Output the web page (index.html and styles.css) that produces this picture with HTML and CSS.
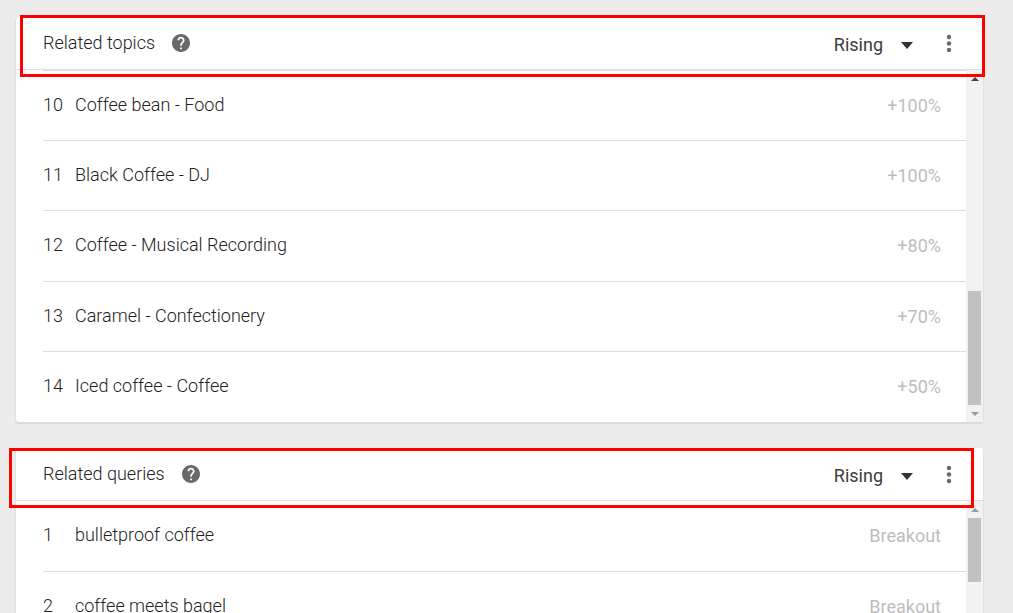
FILE: index.html
```html
<!DOCTYPE html>
<html lang="en">
<head>
<meta charset="utf-8">
<meta name="viewport" content="width=device-width, initial-scale=1">
<title>Related topics and queries</title>
<link rel="stylesheet" href="styles.css">
</head>
<body>
<svg class="symbols" aria-hidden="true">
  <symbol id="help" viewBox="2 2 20 20"><path d="M12 2C6.480 2 2 6.480 2 12s4.480 10 10 10 10-4.480 10-10S17.520 2 12 2zm1 17h-2v-2h2v2zm2.070-7.750-.9.920C13.450 12.900 13 13.500 13 15h-2v-.5c0-1.100.45-2.100 1.170-2.830l1.240-1.260c.37-.36.59-.86.59-1.410 0-1.100-.9-2-2-2s-2 .9-2 2H8c0-2.210 1.790-4 4-4s4 1.790 4 4c0 .88-.36 1.680-.93 2.250z"/></symbol>
  <symbol id="more" viewBox="0 0 6 20"><circle cx="3" cy="4" r="2.200"/><circle cx="3" cy="10.500" r="2.200"/><circle cx="3" cy="17" r="2.200"/></symbol>
  <symbol id="caret" viewBox="0 0 12 7"><path d="M0 0h12L6 7z"/></symbol>
  <symbol id="up" viewBox="0 0 8 4"><path d="M0 4h8L4 0z"/></symbol>
  <symbol id="down" viewBox="0 0 8 4"><path d="M0 0h8L4 4z"/></symbol>
</svg>
<main class="page">
  <section class="card">
    <header class="card-header">
      <h2 class="title">Related topics</h2>
      <button class="icon-button" type="button" aria-label="Help"><svg class="help-icon"><use href="#help"/></svg></button>
      <label class="sort">
        <select class="sort-select" aria-label="Sort topics"><option>Rising</option><option>Top</option></select>
        <svg class="caret-icon"><use href="#caret"/></svg>
      </label>
      <button class="icon-button" type="button" aria-label="More options"><svg class="more-icon"><use href="#more"/></svg></button>
    </header>
    <div class="card-body">
      <ol class="list">
        <li class="row"><span class="rank">10</span><span class="name">Coffee bean - Food</span><span class="value">+100%</span></li>
        <li class="row"><span class="rank">11</span><span class="name">Black Coffee - DJ</span><span class="value">+100%</span></li>
        <li class="row"><span class="rank">12</span><span class="name">Coffee - Musical Recording</span><span class="value">+80%</span></li>
        <li class="row"><span class="rank">13</span><span class="name">Caramel - Confectionery</span><span class="value">+70%</span></li>
        <li class="row"><span class="rank">14</span><span class="name">Iced coffee - Coffee</span><span class="value">+50%</span></li>
      </ol>
      <div class="scrollbar scrollbar-end" aria-hidden="true">
        <svg class="arrow arrow-dark"><use href="#up"/></svg>
        <div class="thumb thumb-long"></div>
        <svg class="arrow"><use href="#down"/></svg>
      </div>
    </div>
    <div class="highlight highlight-topics"></div>
  </section>
  <section class="card">
    <header class="card-header">
      <h2 class="title">Related queries</h2>
      <button class="icon-button" type="button" aria-label="Help"><svg class="help-icon"><use href="#help"/></svg></button>
      <label class="sort">
        <select class="sort-select" aria-label="Sort queries"><option>Rising</option><option>Top</option></select>
        <svg class="caret-icon"><use href="#caret"/></svg>
      </label>
      <button class="icon-button" type="button" aria-label="More options"><svg class="more-icon"><use href="#more"/></svg></button>
    </header>
    <div class="card-body">
      <ol class="list list-top">
        <li class="row"><span class="rank">1</span><span class="name">bulletproof coffee</span><span class="value">Breakout</span></li>
        <li class="row"><span class="rank">2</span><span class="name">coffee meets bagel</span><span class="value">Breakout</span></li>
      </ol>
      <div class="scrollbar" aria-hidden="true">
        <svg class="arrow"><use href="#up"/></svg>
        <div class="thumb"></div>
      </div>
    </div>
    <div class="highlight highlight-queries"></div>
  </section>
</main>
</body>
</html>
```
FILE: styles.css
```css
* { box-sizing: border-box; }

body {
  margin: 0;
  background: #ececec;
  color: #3c3c3c;
  font: 18px/24px Roboto, sans-serif;
}

.symbols { display: none; }

.page {
  display: flex;
  flex-direction: column;
  gap: 26px;
  height: 100vh;
  padding: 17px 30px 0 16px;
  overflow: hidden;
}

.card {
  position: relative;
  flex: none;
  background: #fff;
  border-radius: 3px;
  box-shadow: 0 2px 1px #dcdcdc, 0 1px 1px 1px #e0e0e0;
}

.card-header {
  display: flex;
  align-items: center;
  height: 53px;
  padding: 0 31px 0 27px;
  border-bottom: 1px solid #dedede;
}

.title {
  margin: 0 17px 0 0;
  color: #222;
  font-size: 18px;
  font-weight: 300;
}

.icon-button {
  display: flex;
  padding: 0 0 1px;
  border: 0;
  background: none;
  fill: #696969;
}

.help-icon { width: 18px; height: 18px; }
.more-icon { width: 6px; height: 20px; }

.sort {
  display: flex;
  align-items: center;
  gap: 18px;
  margin: 4px 33px 0 auto;
}

.sort-select {
  appearance: none;
  padding: 0;
  border: 0;
  background: none;
  color: inherit;
  font: inherit;
  field-sizing: content;
}

.caret-icon {
  width: 12px;
  height: 7px;
  fill: #333;
  pointer-events: none;
}

.card-body { display: flex; }

.list {
  flex: 1;
  margin: 0;
  padding: 0 0 0 27px;
  list-style: none;
}

.row {
  display: flex;
  align-items: center;
  min-height: 70px;
  padding: 0 25px 2px 0;
  border-top: 1px solid #dedede;
}

.row:nth-child(3n) { min-height: 71px; }
.row:nth-child(5n) { min-height: 71px; }
.list-top .row:first-child { border-top: 0; }

.rank,
.name {
  color: #222;
  font-weight: 300;
}

.rank { width: 32px; }
.name { flex: 1; }

.value {
  padding-top: 2px;
  color: #bdbdbd;
}

.scrollbar {
  display: flex;
  flex-direction: column;
  align-items: center;
  width: 17px;
  background: #f2f2f2;
}

.scrollbar-end { justify-content: space-between; }

.arrow {
  flex: none;
  width: 8px;
  height: 4px;
  margin: 7px 0 6px;
  fill: #999;
}

.arrow-dark {
  margin-bottom: auto;
  fill: #444;
}

.thumb {
  width: 13px;
  height: 64px;
  background: #c1c1c1;
}

.thumb-long { height: 114px; }

.highlight {
  position: absolute;
  border: 3px solid #fe0000;
  pointer-events: none;
}

.highlight-topics {
  top: -2px;
  right: -2px;
  left: 4px;
  height: 62px;
}

.highlight-queries {
  top: 0;
  right: 9px;
  left: -7px;
  height: 60px;
}
```
